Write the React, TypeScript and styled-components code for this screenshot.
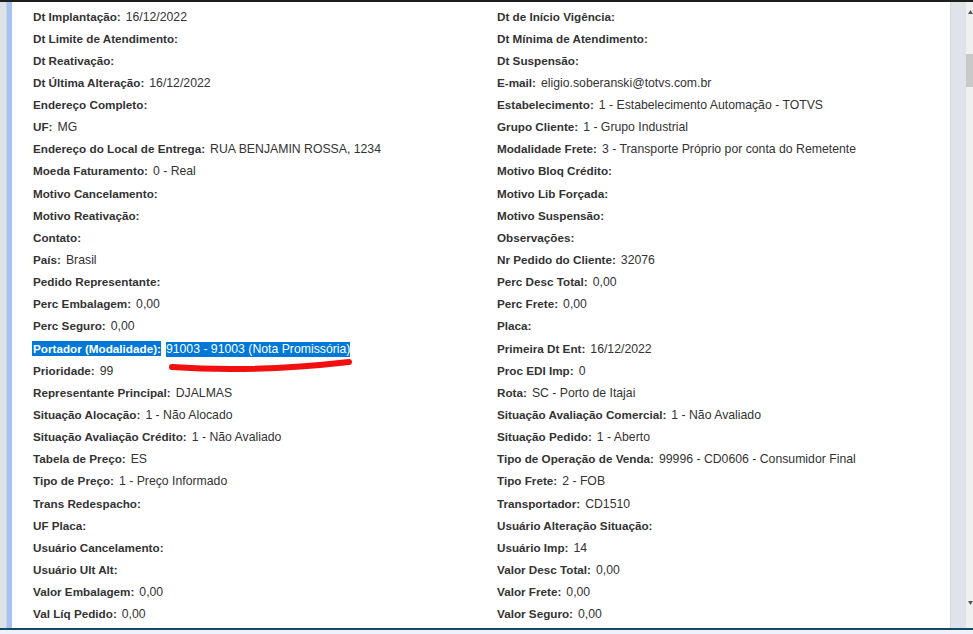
import React from "react";
import styled, { createGlobalStyle } from "styled-components";

const GlobalStyle = createGlobalStyle`
  html, body {
    margin: 0;
    padding: 0;
    background: #f0f2f4;
    overflow: hidden;
  }
`;

const Frame = styled.div`
  width: 973px;
  height: 634px;
  display: flex;
  flex-direction: column;
  font-family: "Liberation Sans", Arial, sans-serif;
`;

const TopRule = styled.div`
  height: 2px;
  background: #1e1e1e;
`;

const Main = styled.div`
  height: 626px;
  display: flex;
`;

const Gutter = styled.div`
  width: 6px;
  background: #dce2e7;
  border-right: 1px solid #cbd1d6;
`;

const Accent = styled.div`
  width: 5px;
  background: #a5c3f5;
`;

const Content = styled.div`
  flex: 1;
  background: #ffffff;
  overflow: hidden;
`;

const FieldGrid = styled.div`
  display: grid;
  grid-template-columns: 464px 1fr;
  grid-auto-rows: 22.15px;
  padding: 6.5px 0 0 21px;
`;

const Field = styled.div`
  position: relative;
  display: flex;
  align-items: baseline;
  white-space: nowrap;
  color: #333333;
  line-height: 15px;
`;

const Label = styled.span<{ $selected?: boolean }>`
  font-weight: bold;
  font-size: 11.7px;
  margin-right: 5px;
  padding-left: ${({ $selected }) => ($selected ? "1px" : "0")};
  margin-left: ${({ $selected }) => ($selected ? "-1px" : "0")};
  background: ${({ $selected }) => ($selected ? "#0078d7" : "transparent")};
  color: ${({ $selected }) => ($selected ? "#ffffff" : "#333333")};
`;

const Value = styled.span<{ $selected?: boolean }>`
  font-size: 12.25px;
  background: ${({ $selected }) => ($selected ? "#0078d7" : "transparent")};
  color: ${({ $selected }) => ($selected ? "#ffffff" : "#333333")};
`;

const Mark = styled.svg`
  position: absolute;
  left: 134px;
  top: 17px;
  overflow: visible;
`;

const SidePanel = styled.div`
  width: 15px;
  background: #dee4ea;
  border-left: 1px solid #d6d9dc;
`;

const Scrollbar = styled.div`
  width: 7px;
  background: #f0f0f0;
  position: relative;
`;

const ScrollThumb = styled.div`
  position: absolute;
  left: 0;
  right: 0;
  top: 52px;
  height: 33px;
  background: #c9c9c9;
`;

const ScrollArrow = styled.svg<{ $bottom?: boolean }>`
  position: absolute;
  left: 2px;
  ${({ $bottom }) => ($bottom ? "bottom: 22px;" : "top: 7px;")}
`;

const BottomRule = styled.div`
  height: 2px;
  background: #134a6c;
`;

const Footer = styled.div`
  flex: 1;
  background: #f0f3f5;
`;

type Item = { label: string; value?: string; selected?: boolean };

const left: Item[] = [
  { label: "Dt Implantação:", value: "16/12/2022" },
  { label: "Dt Limite de Atendimento:" },
  { label: "Dt Reativação:" },
  { label: "Dt Última Alteração:", value: "16/12/2022" },
  { label: "Endereço Completo:" },
  { label: "UF:", value: "MG" },
  { label: "Endereço do Local de Entrega:", value: "RUA BENJAMIN ROSSA, 1234" },
  { label: "Moeda Faturamento:", value: "0 - Real" },
  { label: "Motivo Cancelamento:" },
  { label: "Motivo Reativação:" },
  { label: "Contato:" },
  { label: "País:", value: "Brasil" },
  { label: "Pedido Representante:" },
  { label: "Perc Embalagem:", value: "0,00" },
  { label: "Perc Seguro:", value: "0,00" },
  { label: "Portador (Modalidade):", value: "91003 - 91003 (Nota Promissória)", selected: true },
  { label: "Prioridade:", value: "99" },
  { label: "Representante Principal:", value: "DJALMAS" },
  { label: "Situação Alocação:", value: "1 - Não Alocado" },
  { label: "Situação Avaliação Crédito:", value: "1 - Não Avaliado" },
  { label: "Tabela de Preço:", value: "ES" },
  { label: "Tipo de Preço:", value: "1 - Preço Informado" },
  { label: "Trans Redespacho:" },
  { label: "UF Placa:" },
  { label: "Usuário Cancelamento:" },
  { label: "Usuário Ult Alt:" },
  { label: "Valor Embalagem:", value: "0,00" },
  { label: "Val Líq Pedido:", value: "0,00" },
];

const right: Item[] = [
  { label: "Dt de Início Vigência:" },
  { label: "Dt Mínima de Atendimento:" },
  { label: "Dt Suspensão:" },
  { label: "E-mail:", value: "eligio.soberanski@totvs.com.br" },
  { label: "Estabelecimento:", value: "1 - Estabelecimento Automação - TOTVS" },
  { label: "Grupo Cliente:", value: "1 - Grupo Industrial" },
  { label: "Modalidade Frete:", value: "3 - Transporte Próprio por conta do Remetente" },
  { label: "Motivo Bloq Crédito:" },
  { label: "Motivo Lib Forçada:" },
  { label: "Motivo Suspensão:" },
  { label: "Observações:" },
  { label: "Nr Pedido do Cliente:", value: "32076" },
  { label: "Perc Desc Total:", value: "0,00" },
  { label: "Perc Frete:", value: "0,00" },
  { label: "Placa:" },
  { label: "Primeira Dt Ent:", value: "16/12/2022" },
  { label: "Proc EDI Imp:", value: "0" },
  { label: "Rota:", value: "SC - Porto de Itajai" },
  { label: "Situação Avaliação Comercial:", value: "1 - Não Avaliado" },
  { label: "Situação Pedido:", value: "1 - Aberto" },
  { label: "Tipo de Operação de Venda:", value: "99996 - CD0606 - Consumidor Final" },
  { label: "Tipo Frete:", value: "2 - FOB" },
  { label: "Transportador:", value: "CD1510" },
  { label: "Usuário Alteração Situação:" },
  { label: "Usuário Imp:", value: "14" },
  { label: "Valor Desc Total:", value: "0,00" },
  { label: "Valor Frete:", value: "0,00" },
  { label: "Valor Seguro:", value: "0,00" },
];

function FieldRow({ item }: { item: Item }) {
  return (
    <Field>
      <Label $selected={item.selected}>{item.label}</Label>
      {item.value && <Value $selected={item.selected}>{item.value}</Value>}
      {item.selected && (
        <Mark width="190" height="16" viewBox="0 0 190 16">
          <path
            d="M5 9 Q 85 15 182 4"
            fill="none"
            stroke="#f20f0f"
            strokeWidth="6"
            strokeLinecap="round"
          />
        </Mark>
      )}
    </Field>
  );
}

export default function App() {
  const rows = left.flatMap((item, i) => [item, right[i]]);
  return (
    <Frame>
      <GlobalStyle />
      <TopRule />
      <Main>
        <Gutter />
        <Accent />
        <Content>
          <FieldGrid>
            {rows.map((item, i) => (
              <FieldRow key={i} item={item} />
            ))}
          </FieldGrid>
        </Content>
        <SidePanel />
        <Scrollbar>
          <ScrollArrow width="5" height="5" viewBox="0 0 5 5">
            <path d="M0 5 L2.5 1 L5 5 Z" fill="#555" />
          </ScrollArrow>
          <ScrollThumb />
          <ScrollArrow $bottom width="5" height="5" viewBox="0 0 5 5">
            <path d="M0 0 L2.5 4 L5 0 Z" fill="#555" />
          </ScrollArrow>
        </Scrollbar>
      </Main>
      <BottomRule />
      <Footer />
    </Frame>
  );
}
